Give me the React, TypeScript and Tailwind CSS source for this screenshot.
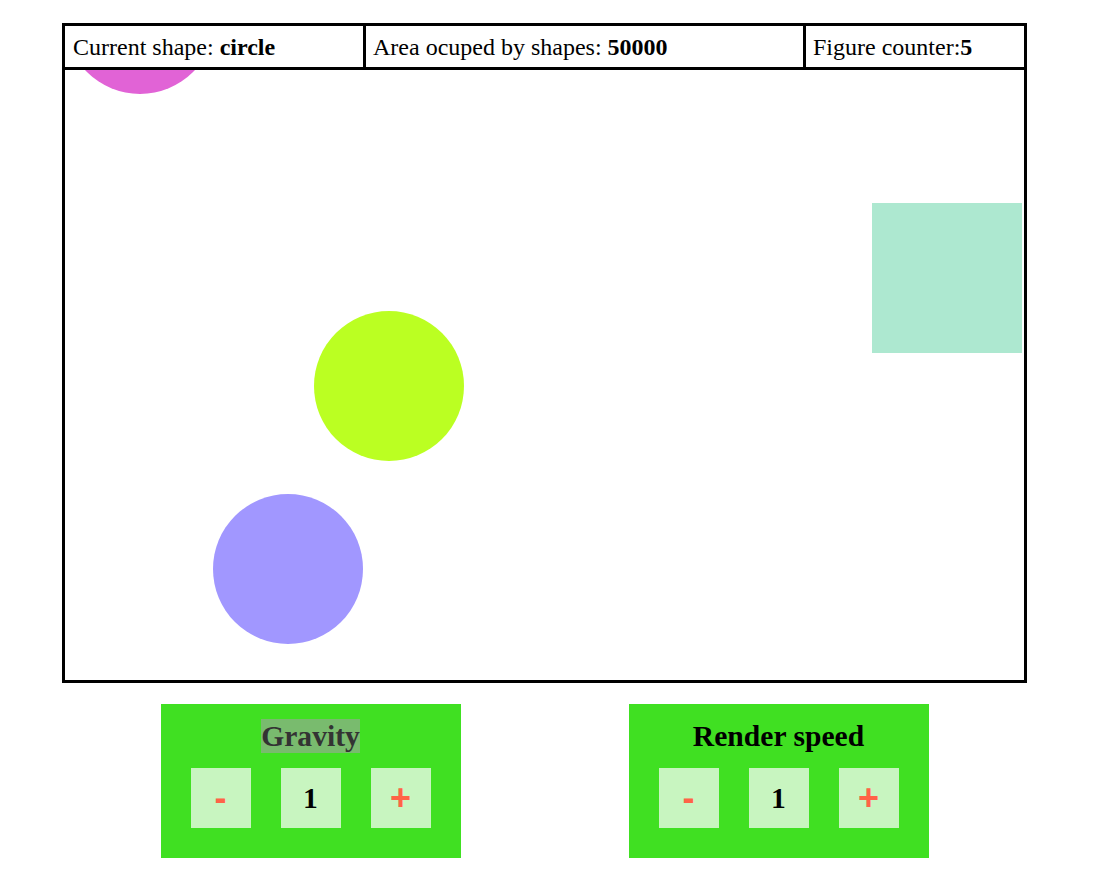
import React from "react";

type Shape = {
  kind: "circle" | "square";
  left: number;
  top: number;
  color: string;
};

const shapes: Shape[] = [
  { kind: "circle", left: 0, top: -126, color: "#e163d6" },
  { kind: "square", left: 807, top: 133, color: "#ade8d0" },
  { kind: "circle", left: 249, top: 241, color: "#bbff22" },
  { kind: "circle", left: 148, top: 424, color: "#a197ff" },
];

function Control({ title, highlight }: { title: string; highlight?: boolean }) {
  return (
    <div className="w-[300px] h-[154px] bg-[#40e022] flex flex-col items-center pt-[15px]">
      <h2
        className={`text-[29.6px] font-bold leading-[34px] ${
          highlight ? "bg-[#79bb6e] text-[#333333]" : "text-black"
        }`}
      >
        {title}
      </h2>
      <div className="flex gap-[30px] mt-[15px]">
        <button className="w-[60px] h-[60px] bg-[#c8f5c0] text-[#ff6347] font-bold text-[36px] leading-none flex items-center justify-center font-['Liberation_Sans',Arial,sans-serif]">
          -
        </button>
        <div className="w-[60px] h-[60px] bg-[#c8f5c0] text-black font-bold text-[29.6px] flex items-center justify-center">
          1
        </div>
        <button className="w-[60px] h-[60px] bg-[#c8f5c0] text-[#ff6347] font-bold text-[36px] leading-none flex items-center justify-center font-['Liberation_Sans',Arial,sans-serif]">
          +
        </button>
      </div>
    </div>
  );
}

export default function App() {
  return (
    <div className="min-h-screen bg-white font-['Liberation_Serif','Times_New_Roman',serif] text-black pt-[23px] pl-[62px]">
      <div className="w-[965px] border-[3px] border-black">
        <div className="relative z-10 flex h-[44px] border-b-[3px] border-black bg-white text-[24px]">
          <div className="w-[301px] border-r-[3px] border-black flex items-center pl-[8px] pt-[1px]">
            <span>
              Current shape: <b>circle</b>
            </span>
          </div>
          <div className="w-[440px] border-r-[3px] border-black flex items-center pl-[7px] pt-[1px]">
            <span>
              Area ocuped by shapes: <b>50000</b>
            </span>
          </div>
          <div className="flex-1 flex items-center pl-[7px] pt-[1px]">
            <span>
              Figure counter:<b>5</b>
            </span>
          </div>
        </div>
        <div className="relative h-[610px] overflow-hidden">
          {shapes.map((s, i) => (
            <div
              key={i}
              className={`absolute w-[150px] h-[150px] ${s.kind === "circle" ? "rounded-full" : ""}`}
              style={{ left: s.left, top: s.top, backgroundColor: s.color }}
            />
          ))}
        </div>
      </div>
      <div className="w-[965px] flex justify-center gap-[168px] mt-[21px]">
        <Control title="Gravity" highlight />
        <Control title="Render speed" />
      </div>
    </div>
  );
}
